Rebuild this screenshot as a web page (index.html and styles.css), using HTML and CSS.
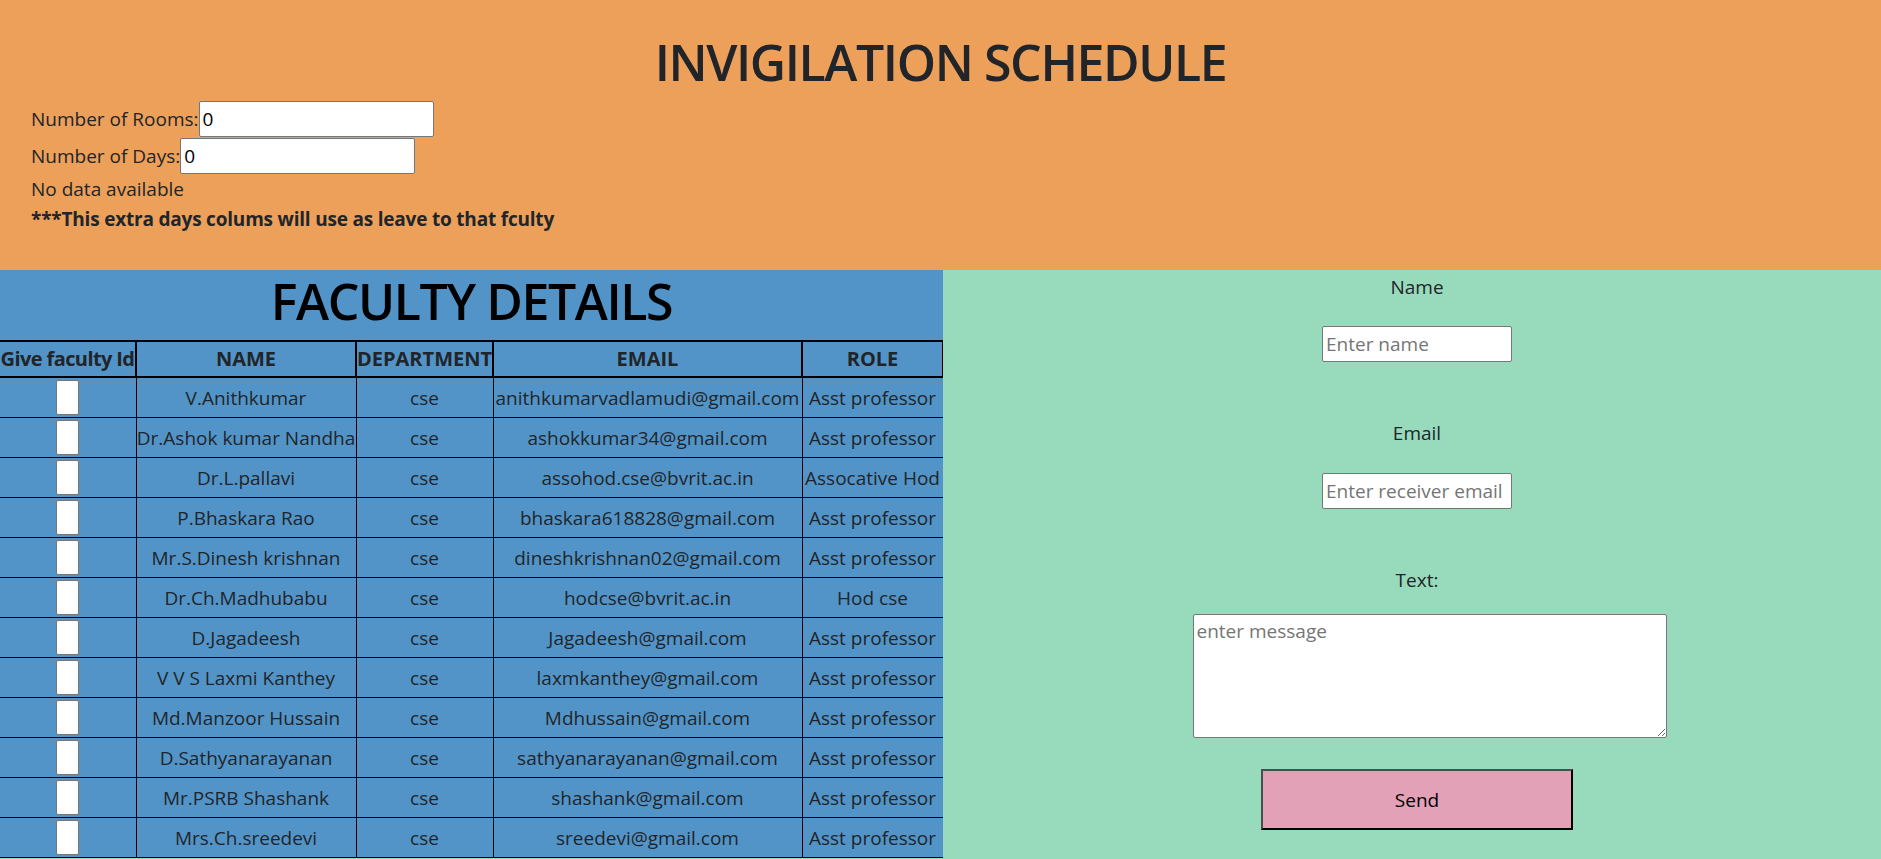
FILE: index.html
```html
<!DOCTYPE html>
<html>
<head>
<meta charset="utf-8">
<title>Invigilation Schedule</title>
<link rel="stylesheet" href="styles.css">
</head>
<body>
<header class="top">
  <h1 class="title">INVIGILATION SCHEDULE</h1>
  <div class="field-row"><span>Number of Rooms:</span><input class="num-input" type="text" value="0"></div>
  <div class="field-row"><span>Number of Days:</span><input class="num-input" type="text" value="0"></div>
  <div class="line">No data available</div>
  <div class="line bold">***This extra days colums will use as leave to that fculty</div>
</header>
<main class="lower">
  <section class="faculty">
    <h2 class="faculty-title">FACULTY DETAILS</h2>
    <table class="ftable">
      <colgroup>
        <col class="c1"><col class="c2"><col class="c3"><col class="c4"><col class="c5">
      </colgroup>
      <thead>
        <tr><th class="id-head">Give faculty Id</th><th>NAME</th><th>DEPARTMENT</th><th>EMAIL</th><th>ROLE</th></tr>
      </thead>
      <tbody>
        <tr><td><input class="id-input" type="text"></td><td>V.Anithkumar</td><td>cse</td><td>anithkumarvadlamudi@gmail.com</td><td>Asst professor</td></tr>
        <tr><td><input class="id-input" type="text"></td><td>Dr.Ashok kumar Nandha</td><td>cse</td><td>ashokkumar34@gmail.com</td><td>Asst professor</td></tr>
        <tr><td><input class="id-input" type="text"></td><td>Dr.L.pallavi</td><td>cse</td><td>assohod.cse@bvrit.ac.in</td><td>Assocative Hod</td></tr>
        <tr><td><input class="id-input" type="text"></td><td>P.Bhaskara Rao</td><td>cse</td><td>bhaskara618828@gmail.com</td><td>Asst professor</td></tr>
        <tr><td><input class="id-input" type="text"></td><td>Mr.S.Dinesh krishnan</td><td>cse</td><td>dineshkrishnan02@gmail.com</td><td>Asst professor</td></tr>
        <tr><td><input class="id-input" type="text"></td><td>Dr.Ch.Madhubabu</td><td>cse</td><td>hodcse@bvrit.ac.in</td><td>Hod cse</td></tr>
        <tr><td><input class="id-input" type="text"></td><td>D.Jagadeesh</td><td>cse</td><td>Jagadeesh@gmail.com</td><td>Asst professor</td></tr>
        <tr><td><input class="id-input" type="text"></td><td>V V S Laxmi Kanthey</td><td>cse</td><td>laxmkanthey@gmail.com</td><td>Asst professor</td></tr>
        <tr><td><input class="id-input" type="text"></td><td>Md.Manzoor Hussain</td><td>cse</td><td>Mdhussain@gmail.com</td><td>Asst professor</td></tr>
        <tr><td><input class="id-input" type="text"></td><td>D.Sathyanarayanan</td><td>cse</td><td>sathyanarayanan@gmail.com</td><td>Asst professor</td></tr>
        <tr><td><input class="id-input" type="text"></td><td>Mr.PSRB Shashank</td><td>cse</td><td>shashank@gmail.com</td><td>Asst professor</td></tr>
        <tr><td><input class="id-input" type="text"></td><td>Mrs.Ch.sreedevi</td><td>cse</td><td>sreedevi@gmail.com</td><td>Asst professor</td></tr>
      </tbody>
    </table>
  </section>
  <section class="mail">
    <div class="mail-label first">Name</div>
    <input class="mail-input gap-a" type="text" placeholder="Enter name">
    <div class="mail-label">Email</div>
    <input class="mail-input gap-b" type="text" placeholder="Enter receiver email">
    <div class="mail-label">Text:</div>
    <textarea class="mail-text" placeholder="enter message"></textarea>
    <button class="send-btn" type="button">Send</button>
  </section>
</main>
</body>
</html>
```

FILE: styles.css
```css
html, body {
  margin: 0;
  padding: 0;
}
body {
  font-family: "Open Sans", "Noto Sans", "DejaVu Sans", sans-serif;
  font-size: 19px;
  line-height: 30px;
  color: #212529;
  background: #98dbbc;
}
.top {
  background: #eda05a;
  padding: 30px 31px 36px;
}
.title {
  margin: 0 0 7px;
  text-align: center;
  font-size: 50px;
  line-height: 64px;
  font-weight: 600;
  letter-spacing: -1.4px;
  color: #212529;
}
.field-row {
  display: flex;
  align-items: center;
  height: 36.5px;
}
.num-input {
  box-sizing: border-box;
  width: 235px;
  height: 36px;
  border: 1px solid #767676;
  border-radius: 2px;
  padding: 0 3px;
  font-family: inherit;
  font-size: 19px;
  color: #000;
  background: #fff;
  margin: 0;
}
.line {
  height: 30px;
}
.bold {
  font-weight: 700;
  letter-spacing: -0.2px;
}
.lower {
  display: grid;
  grid-template-columns: 943px 1fr;
}
.faculty {
  background: #5294c8;
  min-height: 588px;
}
.faculty-title {
  margin: 0 0 8px;
  text-align: center;
  font-size: 50px;
  line-height: 62px;
  font-weight: 600;
  letter-spacing: -1.4px;
  color: #000;
}
.ftable {
  width: 943px;
  table-layout: fixed;
  border-collapse: collapse;
  white-space: nowrap;
}
.c1 { width: 136px; }
.c2 { width: 220px; }
.c3 { width: 137px; }
.c4 { width: 309px; }
.c5 { width: 141px; }
.ftable th {
  border: 2px solid #000;
  height: 34px;
  padding: 0;
  font-size: 20px;
  font-weight: 700;
  text-align: center;
}
.ftable th.id-head {
  letter-spacing: -0.6px;
}
.ftable td {
  border: 1px solid #000;
  height: 39px;
  padding: 0;
  text-align: center;
}
.ftable th:first-child, .ftable td:first-child {
  border-left: none;
}
.id-input {
  box-sizing: border-box;
  display: block;
  margin: 0 auto;
  width: 23px;
  height: 35px;
  border: 1px solid #767676;
  border-radius: 2px;
  background: #fff;
  padding: 0;
}
.mail {
  background: #98dbbc;
  display: flex;
  flex-direction: column;
  align-items: center;
  padding-top: 2px;
  padding-left: 10px;
}
.mail-label {
  margin-top: 56px;
  height: 30px;
}
.mail-label.first {
  margin-top: 0;
}
.mail-input {
  box-sizing: border-box;
  width: 190px;
  height: 36px;
  border: 1px solid #767676;
  border-radius: 2px;
  padding: 0 3px;
  font-family: inherit;
  font-size: 19px;
  background: #fff;
}
.gap-a { margin-top: 24px; }
.gap-b { margin-top: 25px; }
.mail-input::placeholder, .mail-text::placeholder {
  color: #757575;
}
.mail-text {
  box-sizing: border-box;
  margin-top: 19px;
  margin-left: 25px;
  width: 474px;
  height: 124px;
  border: 1px solid #767676;
  border-radius: 2px;
  padding: 3px;
  font-family: inherit;
  font-size: 19px;
  background: #fff;
}
.send-btn {
  box-sizing: border-box;
  margin-top: 31px;
  width: 312px;
  height: 61px;
  background: #e3a1b8;
  border: 2px solid #000;
  border-top-color: #4a4f4e;
  border-left-color: #4a4f4e;
  font-family: inherit;
  font-size: 19px;
  color: #000;
  padding: 0;
}
```
